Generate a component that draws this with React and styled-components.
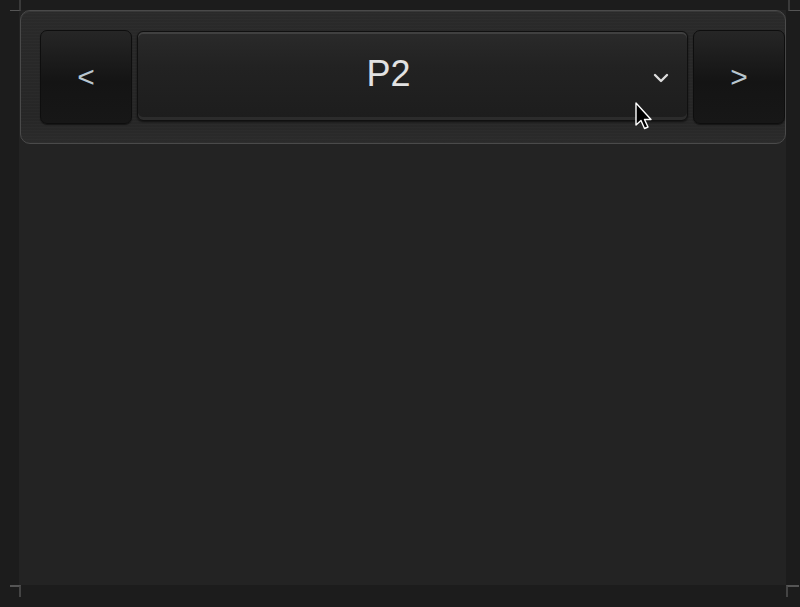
import React from "react";
import styled, { createGlobalStyle } from "styled-components";

const Global = createGlobalStyle`
  html, body { margin: 0; padding: 0; background: #1c1c1c; }
  body { font-family: "Liberation Sans", Arial, sans-serif; }
`;

const Page = styled.div`
  position: relative;
  width: 800px;
  height: 607px;
  box-sizing: border-box;
  padding: 10px 14px 22px 19px;
  background: #1c1c1c;
  overflow: hidden;
`;

const Main = styled.div`
  height: 100%;
  background: #232323;
  display: flex;
  flex-direction: column;
`;

const Toolbar = styled.div`
  box-sizing: border-box;
  height: 134px;
  margin-left: 1px;
  border: 1px solid #4a4a4a;
  border-radius: 10px;
  background:
    repeating-linear-gradient(0deg, rgba(255,255,255,0.015) 0 1px, transparent 1px 3px),
    linear-gradient(180deg, #2a2a2a 0%, #262626 80%, #2b2b2b 100%);
  box-shadow: inset 0 1px 0 #383838;
  display: flex;
  align-items: flex-start;
  gap: 5px;
  padding: 19px 0 0 19px;
`;

const NavButton = styled.button`
  flex: 0 0 92px;
  height: 94px;
  border: 1px solid #0e0e0e;
  border-radius: 7px;
  background: linear-gradient(180deg, #262626 0%, #1c1c1c 30%, #141414 55%, #171717 100%);
  box-shadow: 0 1px 1px rgba(0,0,0,0.5);
  color: #b9c6cf;
  font-family: "Liberation Sans", Arial, sans-serif;
  font-size: 30px;
  line-height: 1;
  display: flex;
  align-items: center;
  justify-content: center;
  padding: 0;
  margin-right: ${p => (p.$edge ? "-3px" : "0")};
`;

const Selector = styled.div`
  position: relative;
  flex: 0 0 551px;
  height: 90px;
  margin-top: 1px;
  box-sizing: border-box;
  border: 1px solid #101010;
  border-radius: 6px;
  background: linear-gradient(180deg, #2a2a2a 0%, #222 40%, #1d1d1d 100%);
  box-shadow: inset 0 2px 0 #404040, inset 0 -3px 0 #2c2c2c, 0 1px 2px rgba(0,0,0,0.6);
  display: flex;
  align-items: center;
  justify-content: center;
`;

const Label = styled.span`
  color: #e2e2e2;
  font-family: "Liberation Sans", Arial, sans-serif;
  font-size: 36px;
  margin-top: -4px;
  margin-left: -48px;
`;

const Caret = styled.svg`
  position: absolute;
  right: 17px;
  top: 41px;
`;

const Corner = styled.div`
  position: absolute;
  width: 9px;
  height: 10px;
  ${p => p.$pos}
`;

const Cursor = styled.svg`
  position: absolute;
  left: 634px;
  top: 102px;
`;

export default function App() {
  return (
    <>
      <Global />
      <Page>
        <Main>
          <Toolbar>
            <NavButton>&lt;</NavButton>
            <Selector>
              <Label>P2</Label>
              <Caret width="18" height="10" viewBox="0 0 18 10">
                <path d="M3 2 L9 8 L15 2" fill="none" stroke="#dcdcdc" strokeWidth="2.4" strokeLinecap="round" strokeLinejoin="round" />
              </Caret>
            </Selector>
            <NavButton $edge>&gt;</NavButton>
          </Toolbar>
        </Main>
        <Corner $pos="left:10px;top:0;border-bottom:1px solid #555;border-right:2px solid #3a3a3a;" />
        <Corner $pos="left:788px;top:0;border-bottom:1px solid #555;border-left:2px solid #3a3a3a;width:12px;" />
        <Corner $pos="left:10px;top:585px;border-top:2px solid #555;border-right:2px solid #444;" />
        <Corner $pos="left:786px;top:585px;border-top:2px solid #555;border-left:2px solid #444;width:11px;" />
        <Cursor width="20" height="30" viewBox="0 0 20 30">
          <path d="M2 1 L2 23 L7 18.5 L10.5 26.5 L14 25 L10.5 17.5 L17 17.5 Z" fill="#000" stroke="#fff" strokeWidth="1.4" strokeLinejoin="round" />
        </Cursor>
      </Page>
    </>
  );
}
